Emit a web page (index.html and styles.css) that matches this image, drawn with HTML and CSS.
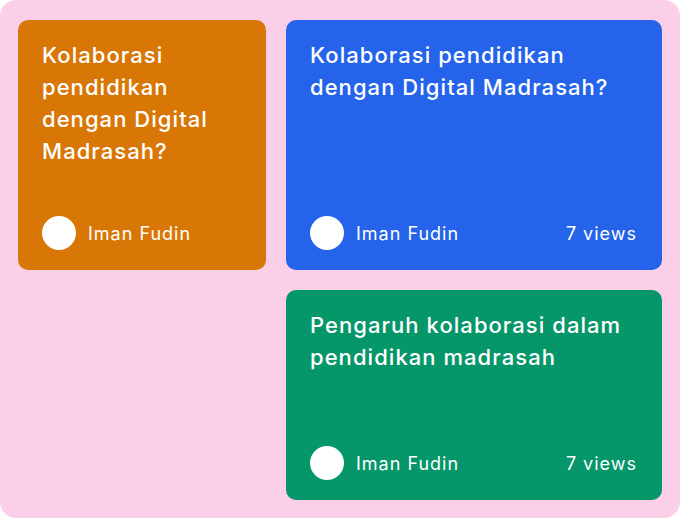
FILE: index.html
```html
<!DOCTYPE html>
<html>
<head>
<meta charset="utf-8">
<link rel="stylesheet" href="styles.css">
</head>
<body>
<div class="board">
  <div class="card orange">
    <div class="title">Kolaborasi pendidikan dengan Digital Madrasah?</div>
    <div class="footer">
      <div class="author"><span class="avatar"></span><span>Iman Fudin</span></div>
    </div>
  </div>
  <div class="card blue">
    <div class="title">Kolaborasi pendidikan dengan Digital Madrasah?</div>
    <div class="footer">
      <div class="author"><span class="avatar"></span><span>Iman Fudin</span></div>
      <span class="views">7 views</span>
    </div>
  </div>
  <div class="card green">
    <div class="title">Pengaruh kolaborasi dalam pendidikan madrasah</div>
    <div class="footer">
      <div class="author"><span class="avatar"></span><span>Iman Fudin</span></div>
      <span class="views">7 views</span>
    </div>
  </div>
</div>
</body>
</html>
```
FILE: styles.css
```css
html, body { margin: 0; padding: 0; background: #fff; }
body { font-family: Inter, "Noto Sans", sans-serif; }
.board {
  width: 680px;
  height: 518px;
  box-sizing: border-box;
  background: #fbcfe8;
  border-radius: 16px;
  padding: 20px 18px 18px 18px;
  display: grid;
  grid-template-columns: 248px 376px;
  grid-template-rows: 250px 210px;
  gap: 20px;
}
.card {
  border-radius: 10px;
  color: #fff;
  padding: 19px 26px 20px 24px;
  box-sizing: border-box;
  display: flex;
  flex-direction: column;
  justify-content: space-between;
}
.orange { background: #d97706; grid-column: 1; grid-row: 1; padding-right: 22px; }
.blue { background: #2563eb; grid-column: 2; grid-row: 1; }
.green { background: #059669; grid-column: 2; grid-row: 2; }
.title {
  font-size: 22px;
  line-height: 32px;
  font-weight: 500;
  letter-spacing: 1.05px;
}
.footer {
  display: flex;
  align-items: center;
  justify-content: space-between;
  font-size: 18px;
  letter-spacing: 1px;
}
.views { margin-right: -1px; }
.author { display: flex; align-items: center; gap: 12px; }
.avatar {
  width: 34px; height: 34px; border-radius: 50%; background: #fff; display: block;
}
```
